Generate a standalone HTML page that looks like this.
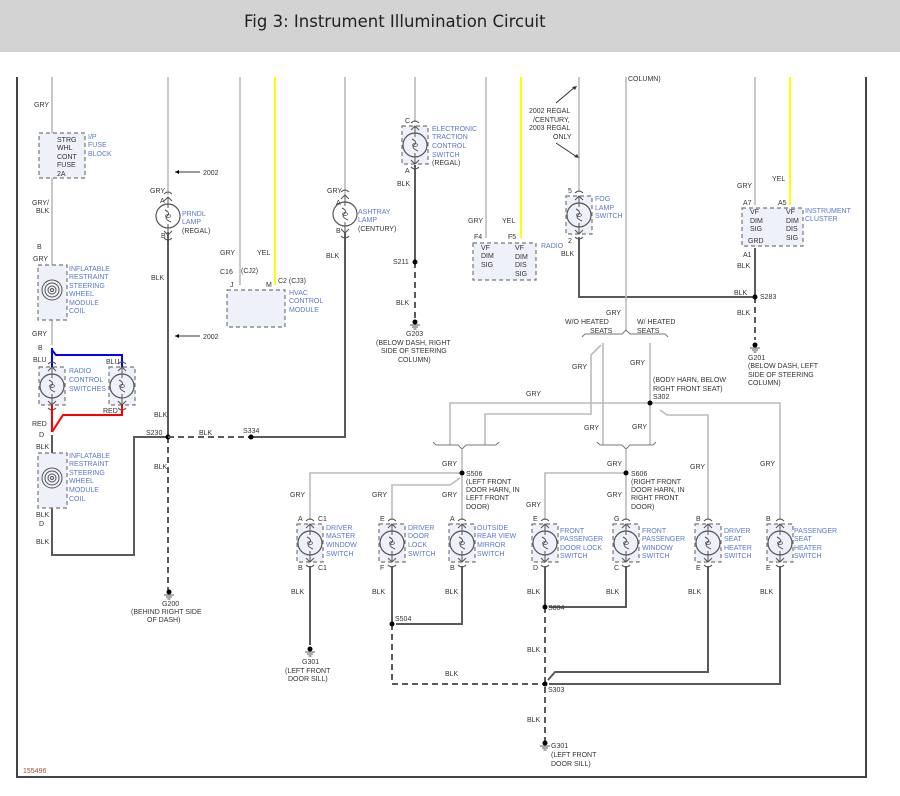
<!DOCTYPE html>
<html><head><meta charset="utf-8"><style>
html,body{margin:0;padding:0;background:#fff;}
body{width:900px;height:796px;overflow:hidden;position:relative;font-family:"Liberation Sans",sans-serif;}
.hdr{position:absolute;left:0;top:0;width:900px;height:52px;background:#d3d3d3;}
.hdr span{position:absolute;left:244px;top:12px;font-size:16.5px;color:#222;font-family:"DejaVu Sans","Liberation Sans",sans-serif;}
svg{position:absolute;left:0;top:0;}
text{font-family:"Liberation Sans",sans-serif;font-size:7px;fill:#333;}
.b{fill:#5a78c8;}
.g{stroke:#bbb;stroke-width:1.6;fill:none;}
.k{stroke:#5a5a5a;stroke-width:2;fill:none;}
.d{stroke:#5a5a5a;stroke-width:2;fill:none;stroke-dasharray:6,4;}
.box{fill:#eef0fa;stroke:#777;stroke-width:1.2;stroke-dasharray:4,3;}
</style></head><body>
<div class="hdr"><span>Fig 3: Instrument Illumination Circuit</span></div>
<svg width="900" height="796" viewBox="0 0 900 796">
<defs>
<g id="lampi">
<circle r="12" fill="none" stroke="#555" stroke-width="1.2"/>
<path d="M0,-19 V-8 M-4,-15 L0,-19 L4,-15 M0,19 V8 M-4,15 L0,19 L4,15 M-3,-6 Q3,-3 -1,0 Q-4,3 3,6" fill="none" stroke="#555" stroke-width="1"/>
<ellipse cx="0" cy="0" rx="2.5" ry="1.5" fill="none" stroke="#555" stroke-width="0.8"/>
<path d="M-4,-22 Q0,-26 4,-22 M-4,22 Q0,26 4,22" fill="none" stroke="#555" stroke-width="1"/>
</g>
<g id="lamp">
<rect class="box" x="-13" y="-19" width="26" height="38"/>
<use href="#lampi"/>
</g>
<g id="gnd"><circle r="2.5" fill="#000"/><path d="M-5,3 H5 M-3,5 H3 M-1.5,7 H1.5" stroke="#555" stroke-width="1"/></g>
<g id="coil"><circle r="10" fill="none" stroke="#555"/><circle r="7" fill="none" stroke="#555"/><circle r="4" fill="none" stroke="#555"/><circle r="1.5" fill="none" stroke="#555"/></g>
</defs>
<path d="M17,77 V777 H866 V77" stroke="#444" stroke-width="2" fill="none"/>

<path class="g" d="M52,77 V345"/>
<rect class="box" x="39" y="133" width="46" height="45"/>
<text x="57" y="142">STRG</text><text x="57" y="150">WHL</text><text x="57" y="159">CONT</text><text x="57" y="167">FUSE</text><text x="57" y="176">2A</text>
<text class="b" x="88" y="139">I/P</text><text class="b" x="88" y="147">FUSE</text><text class="b" x="88" y="156">BLOCK</text>
<text x="34" y="107">GRY</text>
<text x="32" y="205">GRY/</text><text x="36" y="213">BLK</text>
<text x="37" y="249">B</text><text x="33" y="261">GRY</text>
<rect class="box" x="38" y="265" width="29" height="55"/>
<use href="#coil" x="52" y="290"/>
<text class="b" x="69" y="271">INFLATABLE</text><text class="b" x="69" y="279">RESTRAINT</text><text class="b" x="69" y="288">STEERING</text><text class="b" x="69" y="296">WHEEL</text><text class="b" x="69" y="305">MODULE</text><text class="b" x="69" y="313">COIL</text>
<text x="32" y="336">GRY</text><text x="38" y="350">B</text>
<path d="M52,348 V367 M52,350 L56,355 H122 V367" stroke="#0000ff" stroke-width="2" fill="none"/>
<text x="33" y="362">BLU</text><text x="106" y="364">BLU</text>
<use href="#lamp" x="52" y="386"/><use href="#lamp" x="122" y="386"/>
<text class="b" x="69" y="373">RADIO</text><text class="b" x="69" y="382">CONTROL</text><text class="b" x="69" y="391">SWITCHES</text>
<path d="M52,405 V432 M122,405 V415 H63 L52,432" stroke="#ff0000" stroke-width="2" fill="none"/>
<text x="103" y="413">RED</text><text x="32" y="426">RED</text><text x="39" y="437">D</text>
<path class="k" d="M52,435 V555 H134 V437 H168"/>
<text x="36" y="449">BLK</text>
<rect class="box" x="38" y="453" width="29" height="55"/>
<use href="#coil" x="52" y="478"/>
<text class="b" x="69" y="458">INFLATABLE</text><text class="b" x="69" y="466">RESTRAINT</text><text class="b" x="69" y="475">STEERING</text><text class="b" x="69" y="483">WHEEL</text><text class="b" x="69" y="492">MODULE</text><text class="b" x="69" y="501">COIL</text>
<text x="36" y="517">BLK</text><text x="39" y="526">D</text><text x="36" y="544">BLK</text>
<text x="23" y="773" style="fill:#a05030">155496</text>

<path class="g" d="M168,77 V195"/><path class="k" d="M168,232 V437"/><path class="d" d="M168,437 V590"/>
<use href="#lampi" x="168" y="216"/>
<path d="M175,172 H200" stroke="#333"/><path d="M175,172 l4,-2 v4z"/><text x="203" y="175">2002</text>
<path d="M175,336 H200" stroke="#333"/><path d="M175,336 l4,-2 v4z"/><text x="203" y="339">2002</text>
<text x="150" y="193">GRY</text><text x="160" y="203">A</text><text x="161" y="238">B</text>
<text class="b" x="182" y="216">PRNDL</text><text class="b" x="182" y="224">LAMP</text><text x="182" y="233">(REGAL)</text>
<text x="151" y="280">BLK</text><text x="154" y="417">BLK</text><text x="154" y="469">BLK</text>
<text x="146" y="435">S230</text><circle cx="168" cy="437" r="2.5"/>
<use href="#gnd" x="169" y="592"/><text x="162" y="606">G200</text><text x="131" y="614">(BEHIND RIGHT SIDE</text><text x="147" y="622">OF DASH)</text>
<path class="d" d="M168,437 H251"/><path class="k" d="M251,437 H345 V232"/>
<circle cx="251" cy="437" r="2.5"/><text x="243" y="433">S334</text><text x="199" y="435">BLK</text>

<path class="g" d="M240,77 V285"/><path d="M275,77 V285" stroke="#ffff00" stroke-width="2"/>
<rect class="box" x="227" y="290" width="58" height="37"/>
<text x="220" y="255">GRY</text><text x="257" y="255">YEL</text>
<text x="220" y="274">C16</text><text x="241" y="273">(CJ2)</text><text x="230" y="287">J</text><text x="266" y="287">M</text><text x="278" y="283">C2 (CJ3)</text>
<text class="b" x="289" y="295">HVAC</text><text class="b" x="289" y="303">CONTROL</text><text class="b" x="289" y="312">MODULE</text>

<path class="g" d="M345,77 V195"/><use href="#lampi" x="345" y="214"/>
<text x="327" y="193">GRY</text><text x="336" y="205">A</text><text x="336" y="233">B</text><text x="326" y="258">BLK</text>
<text class="b" x="358" y="214">ASHTRAY</text><text class="b" x="358" y="222">LAMP</text><text x="358" y="231">(CENTURY)</text>

<path class="g" d="M415,77 V122"/><path class="k" d="M415,165 V262"/><path class="d" d="M415,262 V320"/>
<use href="#lamp" x="415" y="145"/><circle cx="415" cy="262" r="2.5"/>
<text x="405" y="123">C</text><text x="405" y="173">A</text><text x="397" y="186">BLK</text><text x="393" y="264">S211</text><text x="396" y="305">BLK</text>
<text class="b" x="432" y="131">ELECTRONIC</text><text class="b" x="432" y="139">TRACTION</text><text class="b" x="432" y="148">CONTROL</text><text class="b" x="432" y="157">SWITCH</text><text x="432" y="165">(REGAL)</text>
<use href="#gnd" x="415" y="322"/><text x="406" y="336">G203</text><text x="376" y="345">(BELOW DASH, RIGHT</text><text x="381" y="353">SIDE OF STEERING</text><text x="398" y="362">COLUMN)</text>

<path class="g" d="M486,77 V238"/><path d="M521,77 V238" stroke="#ffff00" stroke-width="2"/>
<rect class="box" x="473" y="243" width="63" height="37"/>
<text x="468" y="223">GRY</text><text x="502" y="223">YEL</text><text x="474" y="239">F4</text><text x="508" y="239">F5</text>
<text x="481" y="250">VF</text><text x="481" y="258">DIM</text><text x="481" y="267">SIG</text>
<text x="515" y="250">VF</text><text x="515" y="259">DIM</text><text x="515" y="267">DIS</text><text x="515" y="276">SIG</text>
<text class="b" x="541" y="248">RADIO</text>

<path class="g" d="M579,77 V192"/><use href="#lamp" x="579" y="215"/>
<path class="k" d="M579,237 V297 H755"/>
<text x="529" y="113">2002 REGAL</text><text x="533" y="122">/CENTURY,</text><text x="529" y="130">2003 REGAL</text><text x="553" y="139">ONLY</text>
<path d="M556,103 L575,87 M556,143 L577,157" stroke="#333"/>
<path d="M577,86 l-5,1 l3,3z M579,158 l-5,-1 l3,-3z" fill="#333"/>
<text x="568" y="193">5</text><text x="568" y="243">2</text><text x="561" y="256">BLK</text>
<text class="b" x="595" y="201">FOG</text><text class="b" x="595" y="210">LAMP</text><text class="b" x="595" y="218">SWITCH</text>
<path class="g" d="M626,77 V330"/><text x="628" y="81">COLUMN)</text>

<path class="g" d="M755,77 V205"/><path d="M790,77 V205" stroke="#ffff00" stroke-width="2"/>
<rect class="box" x="742" y="208" width="61" height="38"/>
<text x="737" y="188">GRY</text><text x="772" y="181">YEL</text><text x="743" y="205">A7</text><text x="778" y="205">A5</text>
<text x="750" y="214">VF</text><text x="750" y="223">DIM</text><text x="750" y="231">SIG</text><text x="748" y="243">GRD</text>
<text x="786" y="214">VF</text><text x="786" y="223">DIM</text><text x="786" y="231">DIS</text><text x="786" y="240">SIG</text>
<text class="b" x="805" y="213">INSTRUMENT</text><text class="b" x="805" y="221">CLUSTER</text>
<path class="k" d="M755,248 V297"/><path class="d" d="M755,297 V340"/><circle cx="755" cy="297" r="2.5"/>
<text x="743" y="257">A1</text><text x="737" y="268">BLK</text><text x="734" y="295">BLK</text><text x="760" y="299">S283</text><text x="737" y="315">BLK</text>
<use href="#gnd" x="755" y="345"/><text x="748" y="360">G201</text><text x="748" y="368">(BELOW DASH, LEFT</text><text x="748" y="377">SIDE OF STEERING</text><text x="748" y="385">COLUMN)</text>

<text x="606" y="315">GRY</text><text x="565" y="324">W/O HEATED</text><text x="590" y="333">SEATS</text><text x="637" y="324">W/ HEATED</text><text x="637" y="333">SEATS</text>
<path d="M582,337 l3,-3 H622 l4,-4 l4,4 H665 l3,3" stroke="#777" fill="none"/>
<path class="g" d="M603,343 V445 M601,345 L591,355 V414 H485 V445 M650,343 V445 M450,445 V403 H780 V520 M660,410 L667,415 H708 V520"/>
<circle cx="650" cy="403" r="2.5"/>
<text x="572" y="369">GRY</text><text x="630" y="365">GRY</text><text x="526" y="396">GRY</text><text x="584" y="430">GRY</text><text x="632" y="429">GRY</text>
<text x="653" y="382">(BODY HARN, BELOW</text><text x="653" y="391">RIGHT FRONT SEAT)</text><text x="653" y="399">S302</text>
<path d="M433,442 l3,3 H458 l4,4 l4,-4 H496 l3,-3 M597,442 l3,3 H622 l4,4 l4,-4 H653 l3,-3" stroke="#777" fill="none"/>
<path class="g" d="M462,450 V520 M310,520 V473 H462 M392,520 V485 H450 L460,478 M626,450 V520 M545,520 V473 H626"/>
<circle cx="462" cy="473" r="2.5"/><circle cx="626" cy="473" r="2.5"/>
<text x="442" y="466">GRY</text><text x="442" y="497">GRY</text><text x="290" y="497">GRY</text><text x="372" y="497">GRY</text>
<text x="466" y="476">S506</text><text x="466" y="484">(LEFT FRONT</text><text x="466" y="492">DOOR HARN, IN</text><text x="466" y="500">LEFT FRONT</text><text x="466" y="509">DOOR)</text>
<text x="607" y="466">GRY</text><text x="607" y="497">GRY</text><text x="526" y="507">GRY</text><text x="690" y="469">GRY</text><text x="760" y="466">GRY</text>
<text x="631" y="476">S606</text><text x="631" y="484">(RIGHT FRONT</text><text x="631" y="492">DOOR HARN, IN</text><text x="631" y="500">RIGHT FRONT</text><text x="631" y="509">DOOR)</text>

<use href="#lamp" x="310" y="543"/><use href="#lamp" x="392" y="543"/><use href="#lamp" x="462" y="543"/>
<use href="#lamp" x="545" y="543"/><use href="#lamp" x="626" y="543"/><use href="#lamp" x="708" y="543"/><use href="#lamp" x="780" y="543"/>
<text x="298" y="521">A</text><text x="318" y="521">C1</text><text x="298" y="570">B</text><text x="318" y="570">C1</text>
<text class="b" x="326" y="530">DRIVER</text><text class="b" x="326" y="538">MASTER</text><text class="b" x="326" y="547">WINDOW</text><text class="b" x="326" y="556">SWITCH</text>
<text x="380" y="521">E</text><text x="380" y="570">F</text>
<text class="b" x="408" y="530">DRIVER</text><text class="b" x="408" y="538">DOOR</text><text class="b" x="408" y="547">LOCK</text><text class="b" x="408" y="556">SWITCH</text>
<text x="450" y="521">A</text><text x="450" y="570">B</text>
<text class="b" x="477" y="530">OUTSIDE</text><text class="b" x="477" y="538">REAR VIEW</text><text class="b" x="477" y="547">MIRROR</text><text class="b" x="477" y="556">SWITCH</text>
<text x="533" y="521">E</text><text x="533" y="570">D</text>
<text class="b" x="560" y="533">FRONT</text><text class="b" x="560" y="541">PASSENGER</text><text class="b" x="560" y="550">DOOR LOCK</text><text class="b" x="560" y="558">SWITCH</text>
<text x="614" y="521">G</text><text x="614" y="570">C</text>
<text class="b" x="642" y="533">FRONT</text><text class="b" x="642" y="541">PASSENGER</text><text class="b" x="642" y="550">WINDOW</text><text class="b" x="642" y="558">SWITCH</text>
<text x="696" y="521">B</text><text x="696" y="570">E</text>
<text class="b" x="724" y="533">DRIVER</text><text class="b" x="724" y="541">SEAT</text><text class="b" x="724" y="550">HEATER</text><text class="b" x="724" y="558">SWITCH</text>
<text x="766" y="521">B</text><text x="766" y="570">E</text>
<text class="b" x="794" y="533">PASSENGER</text><text class="b" x="794" y="541">SEAT</text><text class="b" x="794" y="550">HEATER</text><text class="b" x="794" y="558">SWITCH</text>

<path class="k" d="M310,566 V645 M392,566 V624 M462,566 V624 H396 M545,566 V607 M626,566 V607 H549 M708,566 V672 H555 L548,680 M780,566 V684 H549"/>
<path class="d" d="M392,624 V684 H545 M545,607 V745"/>
<circle cx="392" cy="624" r="2.5"/><circle cx="545" cy="607" r="2.5"/><circle cx="545" cy="684" r="2.5"/>
<text x="291" y="594">BLK</text><text x="372" y="594">BLK</text><text x="445" y="594">BLK</text><text x="527" y="594">BLK</text><text x="606" y="594">BLK</text><text x="688" y="594">BLK</text><text x="760" y="594">BLK</text>
<text x="395" y="621">S504</text><text x="548" y="610">S604</text><text x="527" y="652">BLK</text><text x="445" y="676">BLK</text><text x="548" y="692">S303</text><text x="527" y="722">BLK</text>
<use href="#gnd" x="310" y="649"/><text x="302" y="664">G301</text><text x="285" y="673">(LEFT FRONT</text><text x="288" y="681">DOOR SILL)</text>
<use href="#gnd" x="545" y="743"/><text x="551" y="748">G301</text><text x="551" y="757">(LEFT FRONT</text><text x="551" y="766">DOOR SILL)</text>
</svg>
</body></html>
